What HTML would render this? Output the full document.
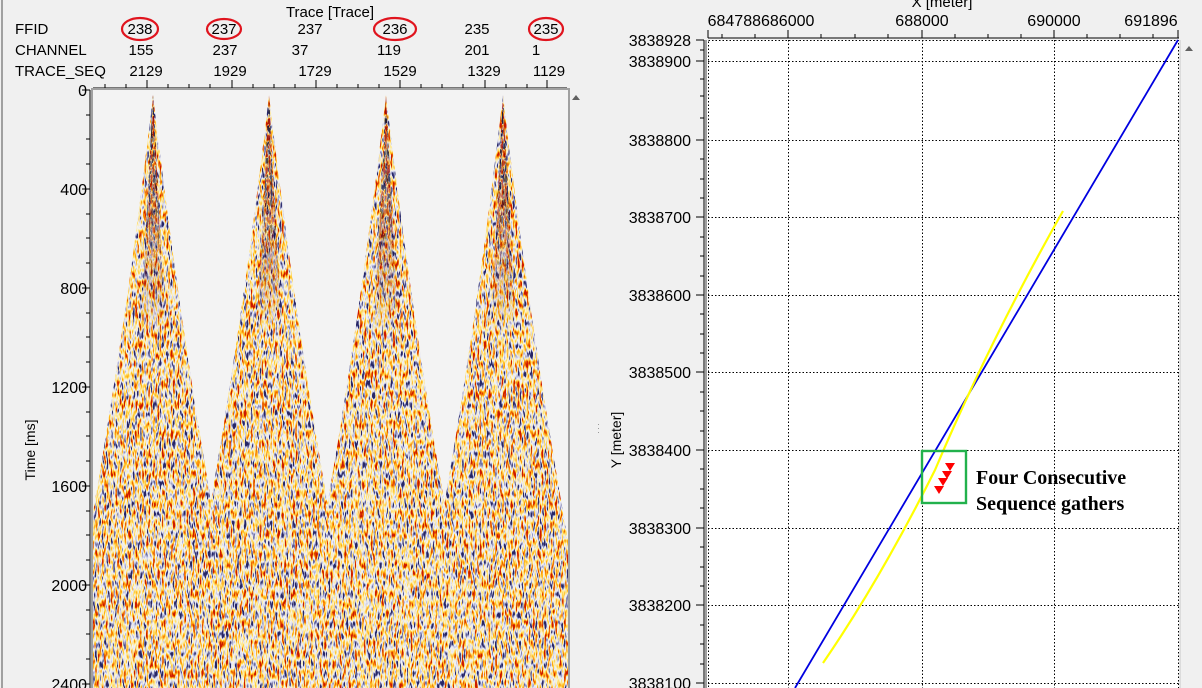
<!DOCTYPE html>
<html><head><meta charset="utf-8"><style>
html,body{margin:0;padding:0;background:#f0f0f0;width:1202px;height:688px;overflow:hidden;font-family:"Liberation Sans",sans-serif;}
</style></head><body>
<svg width="1202" height="688" viewBox="0 0 1202 688" xmlns="http://www.w3.org/2000/svg" style="position:absolute;left:0;top:0;font-family:'Liberation Sans',sans-serif">
<defs>
<filter id="nz" filterUnits="userSpaceOnUse" x="90" y="88" width="480" height="600" color-interpolation-filters="sRGB">
<feTurbulence type="fractalNoise" baseFrequency="0.45 0.1" numOctaves="2" seed="7" result="t"/>
<feColorMatrix in="t" type="matrix" values="2.4 0 0 0 -0.7  2.4 0 0 0 -0.7  2.4 0 0 0 -0.7  0 0 0 0 1" result="g"/>
<feComponentTransfer in="g">
<feFuncR type="table" tableValues="0.15 0.6 0.88 0.96 1 1 1 0.8"/>
<feFuncG type="table" tableValues="0.15 0.62 0.88 0.96 0.92 0.8 0.55 0.1"/>
<feFuncB type="table" tableValues="0.4 0.8 0.95 0.96 0.6 0.2 0 0"/>
</feComponentTransfer>
</filter>
<filter id="nz2" filterUnits="userSpaceOnUse" x="90" y="88" width="480" height="600" color-interpolation-filters="sRGB">
<feTurbulence type="fractalNoise" baseFrequency="0.55 0.12" numOctaves="2" seed="11" result="t"/>
<feColorMatrix in="t" type="matrix" values="5 0 0 0 -2  5 0 0 0 -2  5 0 0 0 -2  0 0 0 0 1" result="g"/>
<feComponentTransfer in="g">
<feFuncR type="table" tableValues="0.05 0.4 0.9 1 1 0.6"/>
<feFuncG type="table" tableValues="0.05 0.4 0.9 0.8 0.35 0.02"/>
<feFuncB type="table" tableValues="0.2 0.6 0.9 0.1 0 0"/>
</feComponentTransfer>
</filter>
<linearGradient id="fade" x1="0" y1="0" x2="0" y2="1"><stop offset="0" stop-color="#fff" stop-opacity="1"/><stop offset="1" stop-color="#fff" stop-opacity="0"/></linearGradient>
<mask id="tipmask" maskUnits="userSpaceOnUse" x="90" y="88" width="480" height="600"><rect x="90" y="95" width="480" height="240" fill="url(#fade)"/></mask>
<clipPath id="cones">
<path d="M153,95 Q118,400 60,688 L246,688 Q188,400 153,95Z"/>
<path d="M269,95 Q234,400 176,688 L362,688 Q304,400 269,95Z"/>
<path d="M386,95 Q351,400 293,688 L479,688 Q421,400 386,95Z"/>
<path d="M503,95 Q468,400 410,688 L596,688 Q538,400 503,95Z"/>
</clipPath>
<clipPath id="tips">
<path d="M153,95 L140,340 L166,340Z"/><path d="M269,95 L256,340 L282,340Z"/><path d="M386,95 L373,340 L399,340Z"/><path d="M503,95 L490,340 L516,340Z"/>
</clipPath>
<clipPath id="plotL"><rect x="93" y="90" width="475" height="598"/></clipPath>
</defs>

<line x1="2" y1="0" x2="2" y2="688" stroke="#a0a0a0" stroke-width="2"/>
<text x="330" y="17" font-size="15" text-anchor="middle" fill="#000">Trace [Trace]</text>
<g font-size="15" fill="#000">
<text x="15" y="34">FFID</text><text x="15" y="55">CHANNEL</text><text x="15" y="76">TRACE_SEQ</text>
<g text-anchor="middle">
<text x="140" y="34">238</text><text x="224" y="34">237</text><text x="310" y="34">237</text><text x="395" y="34">236</text><text x="477" y="34">235</text><text x="546" y="34">235</text>
<text x="141" y="55">155</text><text x="225" y="55">237</text><text x="300" y="55">37</text><text x="389" y="55">119</text><text x="477" y="55">201</text><text x="536" y="55">1</text>
<text x="146" y="76">2129</text><text x="230" y="76">1929</text><text x="315" y="76">1729</text><text x="400" y="76">1529</text><text x="484" y="76">1329</text><text x="549" y="76">1129</text>
</g></g>
<g fill="none" stroke="#e0141e" stroke-width="2.2">
<ellipse cx="140" cy="29" rx="18" ry="11"/><ellipse cx="224" cy="29" rx="17" ry="10"/><ellipse cx="395" cy="29" rx="21" ry="11"/><ellipse cx="546" cy="29" rx="17" ry="11"/>
</g>
<g stroke="#000" stroke-width="1">
<line x1="93" y1="88" x2="567" y2="88"/>
<line x1="147" y1="80" x2="147" y2="88"/><line x1="232" y1="80" x2="232" y2="88"/><line x1="316" y1="80" x2="316" y2="88"/><line x1="400" y1="80" x2="400" y2="88"/><line x1="485" y1="80" x2="485" y2="88"/><line x1="547" y1="80" x2="547" y2="88"/>
<line x1="105" y1="84" x2="105" y2="88"/><line x1="126" y1="84" x2="126" y2="88"/><line x1="168" y1="84" x2="168" y2="88"/><line x1="189" y1="84" x2="189" y2="88"/><line x1="210" y1="84" x2="210" y2="88"/><line x1="253" y1="84" x2="253" y2="88"/><line x1="274" y1="84" x2="274" y2="88"/><line x1="295" y1="84" x2="295" y2="88"/><line x1="337" y1="84" x2="337" y2="88"/><line x1="358" y1="84" x2="358" y2="88"/><line x1="379" y1="84" x2="379" y2="88"/><line x1="421" y1="84" x2="421" y2="88"/><line x1="442" y1="84" x2="442" y2="88"/><line x1="463" y1="84" x2="463" y2="88"/><line x1="506" y1="84" x2="506" y2="88"/><line x1="527" y1="84" x2="527" y2="88"/>
</g>
<g font-size="16" text-anchor="end" fill="#000">
<text x="87" y="96">0</text><text x="87" y="195">400</text><text x="87" y="294">800</text><text x="87" y="393">1200</text><text x="87" y="492">1600</text><text x="87" y="591">2000</text><text x="87" y="690">2400</text>
</g>
<g stroke="#000">
<line x1="90" y1="90" x2="90" y2="688"/>
<line x1="82" y1="90" x2="90" y2="90"/><line x1="82" y1="189" x2="90" y2="189"/><line x1="82" y1="288" x2="90" y2="288"/><line x1="82" y1="387" x2="90" y2="387"/><line x1="82" y1="486" x2="90" y2="486"/><line x1="82" y1="585" x2="90" y2="585"/><line x1="82" y1="684" x2="90" y2="684"/>
<line x1="86" y1="115" x2="90" y2="115"/><line x1="86" y1="139" x2="90" y2="139"/><line x1="86" y1="164" x2="90" y2="164"/><line x1="86" y1="214" x2="90" y2="214"/><line x1="86" y1="238" x2="90" y2="238"/><line x1="86" y1="263" x2="90" y2="263"/><line x1="86" y1="313" x2="90" y2="313"/><line x1="86" y1="337" x2="90" y2="337"/><line x1="86" y1="362" x2="90" y2="362"/><line x1="86" y1="412" x2="90" y2="412"/><line x1="86" y1="436" x2="90" y2="436"/><line x1="86" y1="461" x2="90" y2="461"/><line x1="86" y1="511" x2="90" y2="511"/><line x1="86" y1="535" x2="90" y2="535"/><line x1="86" y1="560" x2="90" y2="560"/><line x1="86" y1="610" x2="90" y2="610"/><line x1="86" y1="634" x2="90" y2="634"/><line x1="86" y1="659" x2="90" y2="659"/>
</g>
<text transform="translate(35,450) rotate(-90)" font-size="14" text-anchor="middle" fill="#000">Time [ms]</text>
<rect x="93" y="90" width="475" height="598" fill="#f3f3f3"/>
<g clip-path="url(#plotL)">
<g clip-path="url(#cones)"><rect x="90" y="88" width="480" height="600" filter="url(#nz)"/></g>
<g clip-path="url(#tips)" mask="url(#tipmask)"><rect x="90" y="88" width="480" height="600" filter="url(#nz2)"/></g>
</g>
<rect x="92" y="89" width="477" height="600" fill="none" stroke="#a0a0a0" stroke-width="2"/>
<rect x="570" y="89" width="13" height="599" fill="#f0f0f0"/>
<path d="M572,100 L576,95 L580,100Z" fill="#606060"/>
<g fill="#999"><rect x="598" y="424" width="1" height="1"/><rect x="598" y="428" width="1" height="1"/><rect x="598" y="432" width="1" height="1"/></g>

<text x="942" y="7" font-size="15" text-anchor="middle" fill="#000">X [meter]</text>
<g font-size="16" fill="#000" text-anchor="middle">
<text x="761" y="26">684788686000</text><text x="922" y="26">688000</text><text x="1054" y="26">690000</text><text x="1151" y="26">691896</text>
</g>
<g stroke="#000">
<line x1="708" y1="38" x2="1179" y2="38"/>
<line x1="708" y1="30" x2="708" y2="38"/><line x1="788" y1="30" x2="788" y2="38"/><line x1="922" y1="30" x2="922" y2="38"/><line x1="1054" y1="30" x2="1054" y2="38"/><line x1="1178" y1="30" x2="1178" y2="38"/>
<line x1="722" y1="34" x2="722" y2="38"/><line x1="755" y1="34" x2="755" y2="38"/><line x1="821" y1="34" x2="821" y2="38"/><line x1="855" y1="34" x2="855" y2="38"/><line x1="888" y1="34" x2="888" y2="38"/><line x1="955" y1="34" x2="955" y2="38"/><line x1="988" y1="34" x2="988" y2="38"/><line x1="1021" y1="34" x2="1021" y2="38"/><line x1="1087" y1="34" x2="1087" y2="38"/><line x1="1120" y1="34" x2="1120" y2="38"/><line x1="1153" y1="34" x2="1153" y2="38"/>
<line x1="704" y1="40" x2="704" y2="688"/>
</g>
<g font-size="16" text-anchor="end" fill="#000">
<text x="691" y="46">3838928</text><text x="691" y="67">3838900</text><text x="691" y="146">3838800</text><text x="691" y="223">3838700</text><text x="691" y="301">3838600</text><text x="691" y="378">3838500</text><text x="691" y="456">3838400</text><text x="691" y="534">3838300</text><text x="691" y="611">3838200</text><text x="691" y="689">3838100</text>
</g>
<g stroke="#000">
<line x1="696" y1="40" x2="704" y2="40"/><line x1="696" y1="61" x2="704" y2="61"/><line x1="696" y1="140" x2="704" y2="140"/><line x1="696" y1="217" x2="704" y2="217"/><line x1="696" y1="295" x2="704" y2="295"/><line x1="696" y1="372" x2="704" y2="372"/><line x1="696" y1="450" x2="704" y2="450"/><line x1="696" y1="528" x2="704" y2="528"/><line x1="696" y1="605" x2="704" y2="605"/><line x1="696" y1="683" x2="704" y2="683"/>
<line x1="700" y1="50" x2="704" y2="50"/><line x1="700" y1="79" x2="704" y2="79"/><line x1="700" y1="96" x2="704" y2="96"/><line x1="700" y1="118" x2="704" y2="118"/><line x1="700" y1="159" x2="704" y2="159"/><line x1="700" y1="179" x2="704" y2="179"/><line x1="700" y1="198" x2="704" y2="198"/><line x1="700" y1="237" x2="704" y2="237"/><line x1="700" y1="256" x2="704" y2="256"/><line x1="700" y1="276" x2="704" y2="276"/><line x1="700" y1="314" x2="704" y2="314"/><line x1="700" y1="334" x2="704" y2="334"/><line x1="700" y1="353" x2="704" y2="353"/><line x1="700" y1="392" x2="704" y2="392"/><line x1="700" y1="411" x2="704" y2="411"/><line x1="700" y1="431" x2="704" y2="431"/><line x1="700" y1="469" x2="704" y2="469"/><line x1="700" y1="489" x2="704" y2="489"/><line x1="700" y1="508" x2="704" y2="508"/><line x1="700" y1="547" x2="704" y2="547"/><line x1="700" y1="567" x2="704" y2="567"/><line x1="700" y1="586" x2="704" y2="586"/><line x1="700" y1="625" x2="704" y2="625"/><line x1="700" y1="644" x2="704" y2="644"/><line x1="700" y1="664" x2="704" y2="664"/>
</g>
<text transform="translate(621,440) rotate(-90)" font-size="14" text-anchor="middle" fill="#000">Y [meter]</text>
<rect x="707" y="40" width="473" height="648" fill="#fff"/>
<g stroke="#000" stroke-width="1" stroke-dasharray="1.5,2" fill="none">
<rect x="708.5" y="40.5" width="470" height="660"/>
<line x1="788.5" y1="40" x2="788.5" y2="688"/><line x1="922.5" y1="40" x2="922.5" y2="688"/><line x1="1054.5" y1="40" x2="1054.5" y2="688"/>
<line x1="708" y1="61.5" x2="1179" y2="61.5"/><line x1="708" y1="140.5" x2="1179" y2="140.5"/><line x1="708" y1="217.5" x2="1179" y2="217.5"/><line x1="708" y1="295.5" x2="1179" y2="295.5"/><line x1="708" y1="372.5" x2="1179" y2="372.5"/><line x1="708" y1="450.5" x2="1179" y2="450.5"/><line x1="708" y1="528.5" x2="1179" y2="528.5"/><line x1="708" y1="605.5" x2="1179" y2="605.5"/><line x1="708" y1="683.5" x2="1179" y2="683.5"/>
</g>
<line x1="706" y1="40" x2="706" y2="688" stroke="#a0a0a0" stroke-width="2"/>
<line x1="1180" y1="40" x2="1180" y2="688" stroke="#c8c8c8" stroke-width="1"/>
<path d="M1178,40 L795,688" stroke="#0000e0" stroke-width="1.8" fill="none"/>
<path d="M1063,211 Q990,340 935,470 Q880,580 823,663" stroke="#ffff00" stroke-width="2.2" fill="none"/>
<rect x="922" y="451" width="44" height="52" fill="none" stroke="#22b14c" stroke-width="2.4"/>
<g fill="#ff0000">
<path d="M945,463 L955,463 L950,471Z"/><path d="M942,471 L952,471 L947,479Z"/><path d="M938,478 L948,478 L943,486Z"/><path d="M934,486 L944,486 L939,494Z"/>
</g>
<g font-family="'Liberation Serif',serif" font-weight="bold" font-size="20" fill="#000">
<text x="976" y="484">Four Consecutive</text><text x="976" y="510">Sequence gathers</text>
</g>
<rect x="1183" y="40" width="19" height="648" fill="#f0f0f0"/>
<path d="M1185,51 L1189,46 L1193,51Z" fill="#606060"/>
</svg>
</body></html>
